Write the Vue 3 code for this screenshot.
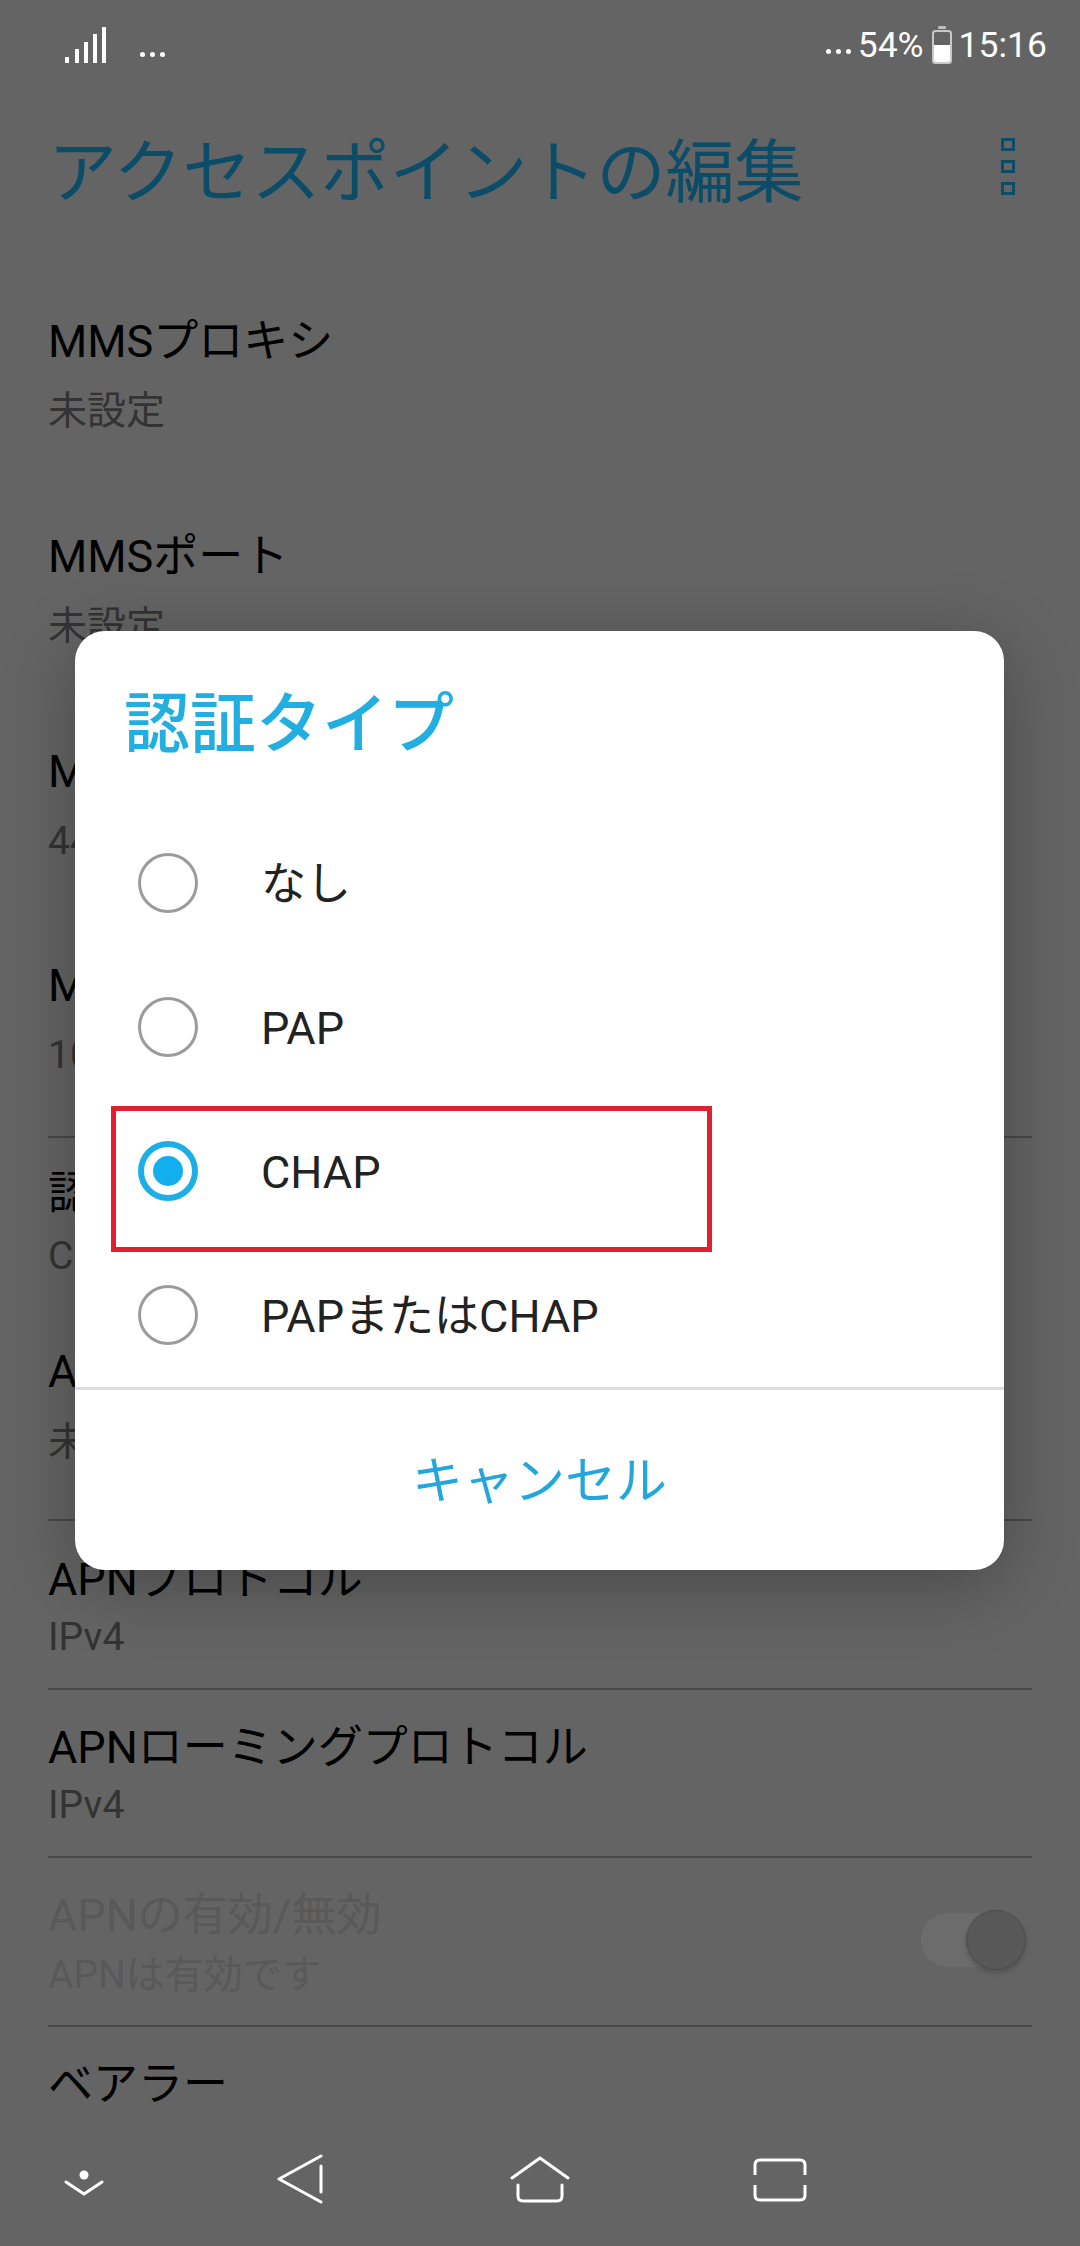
<script setup>
const settings = [
  { title: 'MMSプロキシ', value: '未設定', kind: 'tall' },
  { title: 'MMSポート', value: '未設定', kind: 'tall' },
  { title: 'MCC', value: '440', kind: 'tall' },
  { title: 'MNC', value: '10', kind: 'tall lined' },
  { title: '認証タイプ', value: 'CHAP', kind: 'mid' },
  { title: 'APNタイプ', value: '未設定', kind: 'end lined' },
  { title: 'APNプロトコル', value: 'IPv4', kind: 'short lined' },
  { title: 'APNローミングプロトコル', value: 'IPv4', kind: 'short lined' },
  { title: 'APNの有効/無効', value: 'APNは有効です', kind: 'short lined off', toggle: true },
  { title: 'ベアラー', value: '', kind: 'last' }
]
const options = [
  { label: 'なし', on: false },
  { label: 'PAP', on: false },
  { label: 'CHAP', on: true },
  { label: 'PAPまたはCHAP', on: false }
]
const bars = [
  { x: 0, y: 30, h: 6 },
  { x: 10, y: 22, h: 14 },
  { x: 19, y: 15, h: 21 },
  { x: 28, y: 7, h: 29 },
  { x: 37, y: 0, h: 36 }
]
</script>

<template>
  <div class="page">
    <header class="status">
      <div class="status-left">
        <svg class="signal" width="42" height="36" viewBox="0 0 42 36">
          <rect v-for="b in bars" :key="b.x" :x="b.x" :y="b.y" width="4" :height="b.h" fill="#fff" />
        </svg>
        <span class="dots"><i></i><i></i><i></i></span>
      </div>
      <div class="status-right">
        <span class="dots small"><i></i><i></i><i></i></span>
        <span class="pct">54%</span>
        <svg class="battery" width="20" height="38" viewBox="0 0 20 38">
          <rect x="6" y="0" width="8" height="3" rx="1" fill="#bdbdbd" />
          <rect x="1" y="5" width="18" height="32" rx="2.5" fill="none" stroke="#c8c8c8" stroke-width="2" />
          <path d="M2 19H18V34.5Q18 36 16.5 36H3.5Q2 36 2 34.5Z" fill="#fff" />
        </svg>
        <span class="time">15:16</span>
      </div>
    </header>

    <div class="appbar">
      <h1 class="app-title">アクセスポイントの編集</h1>
      <div class="kebab"><i></i><i></i><i></i></div>
    </div>

    <main class="list">
      <div v-for="s in settings" :key="s.title" class="row" :class="s.kind">
        <div class="row-text">
          <div class="row-title">{{ s.title }}</div>
          <div v-if="s.value" class="row-value">{{ s.value }}</div>
        </div>
        <div v-if="s.toggle" class="toggle"><span class="thumb"></span></div>
      </div>
    </main>

    <nav class="nav">
      <svg class="ic-hide" width="40" height="28" viewBox="0 0 40 28">
        <circle cx="20" cy="5" r="4.5" fill="#fff" />
        <path d="M2 12L20 24L38 12" fill="none" stroke="#fff" stroke-width="3" stroke-linecap="round" stroke-linejoin="round" />
      </svg>
      <svg class="ic-back" width="46" height="50" viewBox="0 0 46 50">
        <path d="M44 2L2 25L44 48" fill="none" stroke="#fff" stroke-width="3" stroke-linecap="round" stroke-linejoin="round" />
        <path d="M44 12V38" fill="none" stroke="#fff" stroke-width="3" stroke-linecap="round" />
      </svg>
      <svg class="ic-home" width="60" height="48" viewBox="0 0 60 48">
        <path d="M2 22L30 2L58 22" fill="none" stroke="#fff" stroke-width="3" stroke-linecap="round" stroke-linejoin="round" />
        <path d="M8 29V40Q8 45 13 45H47Q52 45 52 40V29" fill="none" stroke="#fff" stroke-width="3" stroke-linecap="round" />
      </svg>
      <svg class="ic-recent" width="54" height="44" viewBox="0 0 54 44">
        <path d="M2 17V7Q2 2 7 2H47Q52 2 52 7V17" fill="none" stroke="#fff" stroke-width="3" />
        <path d="M2 27V37Q2 42 7 42H47Q52 42 52 37V27" fill="none" stroke="#fff" stroke-width="3" />
      </svg>
    </nav>

    <section class="dialog">
      <h2 class="dialog-title">認証タイプ</h2>
      <ul class="options">
        <li v-for="o in options" :key="o.label" class="option">
          <span class="radio" :class="{ on: o.on }"></span>
          <span class="option-label">{{ o.label }}</span>
        </li>
      </ul>
      <div class="dialog-actions"><span>キャンセル</span></div>
    </section>

    <div class="highlight"></div>
  </div>
</template>

<style>
html, body { margin: 0; padding: 0; }
</style>

<style scoped>
.page {
  position: relative;
  width: 1080px;
  height: 2246px;
  overflow: hidden;
  display: flex;
  flex-direction: column;
  background: #646464;
  font-family: Roboto, "Noto Sans CJK JP", sans-serif;
  color: #000;
}

/* status bar */
.status {
  height: 90px;
  flex: none;
  display: flex;
  align-items: center;
  justify-content: space-between;
  padding: 0 33px 0 65px;
  color: #fff;
}
.status-left { display: flex; align-items: flex-end; gap: 33px; }
.status-right { display: flex; align-items: center; }
.dots { display: inline-flex; gap: 5px; margin-bottom: 6px; }
.dots i { width: 5px; height: 5px; border-radius: 50%; background: #fff; }
.dots.small { margin: 12px 7px 0 0; gap: 5px; }
.pct, .time { font-size: 35.5px; line-height: 40px; }
.battery { margin: 0 7px 0 8px; }

/* app bar */
.appbar {
  height: 176px;
  flex: none;
  display: flex;
  align-items: center;
  justify-content: space-between;
  padding: 0 65px 16px 48px;
  box-sizing: border-box;
}
.app-title {
  margin: 8px 0 0;
  font-size: 69px;
  line-height: 90px;
  font-weight: 400;
  color: #0b4d68;
}
.kebab { display: flex; flex-direction: column; gap: 9px; margin-top: -8px; }
.kebab i {
  width: 14px;
  height: 13px;
  box-sizing: border-box;
  border: 3px solid #0e4c66;
}

/* settings list */
.list { flex: 1; min-height: 0; margin: 0 48px; overflow: hidden; }
.row {
  display: flex;
  align-items: center;
  justify-content: space-between;
  box-sizing: border-box;
}
.row.lined { border-bottom: 2px solid #484848; }
.row-title { font-size: 45px; line-height: 60px; color: #000; white-space: nowrap; }
.row-value { font-size: 39px; line-height: 50px; color: #333; white-space: nowrap; }
.tall { height: 215px; }
.tall .row-value { margin-top: 14px; }
.tall.lined { height: 227px; padding-bottom: 12px; }
.mid { height: 168px; }
.mid .row-value { margin-top: 7px; }
.end { height: 215px; padding-bottom: 16px; }
.end .row-value { margin-top: 15px; }
.short { height: 168.5px; padding-top: 3px; }
.short .row-value { margin-top: 2px; }
.off .row-title, .off .row-value { color: #595959; }
.off .row-value { margin-top: 4px; }
.last { align-items: flex-start; padding-top: 28px; height: 168px; }

.toggle {
  position: relative;
  width: 105px;
  height: 54px;
  margin: 0 6px 6px 0;
  border-radius: 27px;
  background: #6c6c6c;
}
.thumb {
  position: absolute;
  right: 0;
  top: -3px;
  width: 60px;
  height: 60px;
  box-sizing: border-box;
  border-radius: 50%;
  background: #585858;
  border: 1px solid #4c4c4c;
  box-shadow: 0 3px 5px rgba(0, 0, 0, 0.18);
}

/* navigation bar */
.nav {
  position: absolute;
  left: 0;
  right: 0;
  bottom: 0;
  height: 116px;
  display: flex;
  align-items: flex-start;
}
.ic-hide { margin: 40px 0 0 64px; }
.ic-back { margin: 24px 0 0 173px; }
.ic-home { margin: 26px 0 0 187px; }
.ic-recent { margin: 28px 0 0 183px; }

/* dialog */
.dialog {
  position: absolute;
  left: 75px;
  top: 631px;
  width: 929px;
  height: 939px;
  display: flex;
  flex-direction: column;
  background: #fff;
  border-radius: 30px;
  box-shadow: 0 14px 70px rgba(0, 0, 0, 0.28);
}
.dialog-title {
  margin: 0;
  padding: 49px 0 0 49px;
  font-size: 66px;
  line-height: 90px;
  font-weight: 500;
  color: #22aee0;
}
.options {
  list-style: none;
  margin: 41px 0 0;
  padding: 0;
}
.option {
  height: 144px;
  display: flex;
  align-items: center;
  padding-left: 63px;
}
.radio {
  width: 60px;
  height: 60px;
  box-sizing: border-box;
  border: 3px solid #9b9b9b;
  border-radius: 50%;
  display: flex;
  align-items: center;
  justify-content: center;
  flex: none;
}
.radio.on { border: 6px solid #1eaee6; }
.radio.on::after {
  content: "";
  width: 30px;
  height: 30px;
  border-radius: 50%;
  background: #12aeee;
}
.option-label {
  margin: 3px 0 0 63px;
  font-size: 45px;
  line-height: 60px;
  color: #222;
}
.dialog-actions {
  flex: 1;
  display: flex;
  align-items: center;
  justify-content: center;
  border-top: 3px solid #dedede;
  font-size: 51px;
  color: #22a7dc;
}
.dialog-actions span { margin-bottom: 6px; }

/* annotation over the dialog */
.highlight {
  position: absolute;
  left: 111px;
  top: 1106px;
  width: 601px;
  height: 146px;
  box-sizing: border-box;
  border: 5px solid #e0202e;
}
</style>
